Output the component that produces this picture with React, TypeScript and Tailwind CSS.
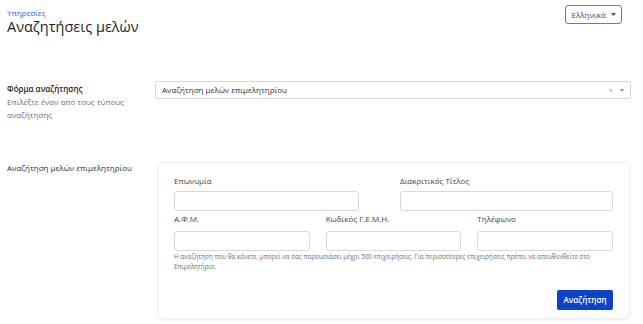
import React from "react";

const font = { fontFamily: '"Open Sans", "Noto Sans", sans-serif' };

function Input({ className = "" }: { className?: string }) {
  return <div className={"h-[20px] rounded-[3px] border border-[#d5d9de] bg-white " + className} />;
}

function Label({ children }: { children: React.ReactNode }) {
  return <div className="text-[8px] leading-[12px] text-[#3a3f45]">{children}</div>;
}

export default function App() {
  return (
    <div className="w-[643px] h-[324px] overflow-hidden bg-white text-[#212529]" style={font}>
      <div className="flex items-start justify-between pl-[7px] pr-[21px] pt-[5px] h-[36px]">
        <div className="pt-[2px]">
          <div className="text-[8px] leading-[11px] text-[#2b5bd7]">Υπηρεσίες</div>
          <div className="text-[14.5px] leading-[18px] text-[#1f2328]">Αναζητήσεις μελών</div>
        </div>
        <button className="h-[19px] w-[57px] rounded-[3px] border border-[#4f7fc6] flex items-center justify-center gap-[5px] text-[8px] text-[#3a4a60]">
          <span>Ελληνικά</span>
          <svg width="5" height="3" viewBox="0 0 5 3"><path d="M0 0h5L2.5 3z" fill="#4a5566" /></svg>
        </button>
      </div>

      <div className="flex pl-[7px] mt-[45px]">
        <div className="w-[148px]">
          <div className="text-[8px] leading-[13px] font-semibold text-[#1f2328] mt-[1px]">Φόρμα αναζήτησης</div>
          <div className="text-[8px] leading-[13px] text-[#6a7079] w-[130px]">Επιλέξτε έναν από τους τύπους αναζήτησης</div>
        </div>
        <div className="w-[476px] h-[18px] rounded-[2px] border border-[#d3d7dc] flex items-center pl-[6px] pr-[6px]">
          <span className="flex-1 text-[8px] text-[#2a2f35]">Αναζήτηση μελών επιμελητηρίου</span>
          <span className="text-[8px] text-[#9aa0a6] mr-[7px] leading-none">×</span>
          <svg width="4" height="3" viewBox="0 0 4 3"><path d="M0 0h4L2 3z" fill="#8a9099" /></svg>
        </div>
      </div>

      <div className="flex pl-[7px] mt-[41px]">
        <div className="w-[150px] pt-[0px] text-[8px] leading-[12px] font-medium text-[#2a2f35]">Αναζήτηση μελών επιμελητηρίου</div>
        <div className="w-[473px] rounded-[6px] border border-[#eceef0] shadow-[0_1px_3px_rgba(0,0,0,0.08)] px-[16px] pt-[12px] pb-[8px]">
          <div className="flex justify-between">
            <div className="w-[185px]">
              <Label>Επωνυμία</Label>
              <Input className="mt-[4px]" />
            </div>
            <div className="w-[213px]">
              <Label>Διακριτικός Τίτλος</Label>
              <Input className="mt-[4px]" />
            </div>
          </div>
          <div className="grid grid-cols-3 gap-x-[16px] mt-[2px]">
            <div>
              <Label>Α.Φ.Μ.</Label>
              <Input className="mt-[6px]" />
            </div>
            <div>
              <Label>Κωδικός Γ.Ε.Μ.Η.</Label>
              <Input className="mt-[6px]" />
            </div>
            <div>
              <Label>Τηλέφωνο</Label>
              <Input className="mt-[6px]" />
            </div>
          </div>
          <div className="mt-[1px] text-[6.3px] leading-[10px] text-[#6a7079]">
            Η αναζήτηση που θα κάνετε, μπορεί να σας παρουσιάσει μέχρι 500 επιχειρήσεις. Για περισσότερες επιχειρήσεις πρέπει να απευθυνθείτε στο Επιμελητήριο.
          </div>
          <div className="flex justify-end mt-[18px]">
            <button className="h-[20px] w-[56px] rounded-[2px] bg-[#0b44c9] text-white text-[8px] font-semibold">Αναζήτηση</button>
          </div>
        </div>
      </div>
    </div>
  );
}
